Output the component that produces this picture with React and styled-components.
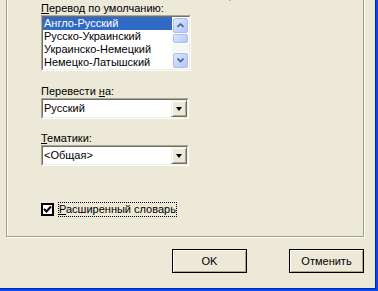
import React from "react";
import styled, { createGlobalStyle } from "styled-components";

const Global = createGlobalStyle`
  html, body { margin: 0; padding: 0; background: #ECE9D8; overflow: hidden; }
  body { font-family: "Liberation Sans", Arial, sans-serif; font-size: 11px; color: #000; }
`;

const Frame = styled.div`
  width: 378px;
  height: 291px;
  box-sizing: border-box;
  border-right: 2px solid #0A48E6;
  border-bottom: 2px solid #0A48E6;
  overflow: hidden;
`;

const Window = styled.div`
  height: 100%;
  box-sizing: border-box;
  border-right: 1px solid #0025B8;
  border-bottom: 1px solid #0025B8;
  background: #ECE9D8;
  padding: 0 11px 0 6px;
  display: flex;
  flex-direction: column;
`;

const Group = styled.div`
  margin-top: -20px;
  height: 257px;
  box-sizing: border-box;
  border: 1px solid #A09E90;
  box-shadow: inset 1px 1px 0 #fff, 1px 1px 0 #fff;
  padding: 8px 0 0 34px;
  display: flex;
  flex-direction: column;
  align-items: flex-start;
`;

const Note = styled.div`
  margin-left: 144px;
  height: 13px;
  line-height: 13px;
  color: #8a8a80;
`;

const Label = styled.div`
  height: 13px;
  line-height: 13px;
  margin-top: ${(p) => p.$mt || 0}px;
  u { text-decoration: underline; }
`;

const Sunken = styled.div`
  box-sizing: border-box;
  width: ${(p) => p.$w}px;
  height: ${(p) => p.$h}px;
  border-top: 1px solid #ACA899;
  border-left: 1px solid #ACA899;
  border-right: 1px solid #fff;
  border-bottom: 1px solid #fff;
  display: flex;
`;

const SunkenInner = styled.div`
  flex: 1;
  display: flex;
  border-top: 1px solid #716F64;
  border-left: 1px solid #716F64;
  border-right: 1px solid #F1EFE2;
  border-bottom: 1px solid #F1EFE2;
  background: #fff;
`;

const Items = styled.div`
  flex: 1;
  display: flex;
  flex-direction: column;
`;

const Item = styled.div`
  height: 13px;
  line-height: 13px;
  padding-left: 1px;
  white-space: nowrap;
  background: ${(p) => (p.$sel ? "#316AC5" : "transparent")};
  color: ${(p) => (p.$sel ? "#fff" : "#000")};
`;

const Scroll = styled.div`
  width: 17px;
  display: flex;
  flex-direction: column;
  background: #F7F7F2;
`;

const ScrollBtn = styled.div`
  height: 17px;
  box-sizing: border-box;
  border: 1px solid #fff;
  display: flex;
  flex-shrink: 0;
  margin-top: ${(p) => (p.$down ? "auto" : "0")};
`;

const ScrollFace = styled.div`
  flex: 1;
  border: 1px solid #A9BDEE;
  border-radius: 2px;
  background: linear-gradient(135deg, #DDE6FD 0%, #C3D3FB 60%, #B3C6F6 100%);
  display: flex;
  align-items: center;
  justify-content: center;
`;

const Thumb = styled.div`
  height: 10px;
  box-sizing: border-box;
  border: 1px solid #fff;
  border-top: 0;
  display: flex;
`;

const Combo = styled(Sunken)`
  margin-top: 0;
`;

const ComboText = styled.div`
  flex: 1;
  padding-left: 1px;
  line-height: 17px;
  white-space: nowrap;
`;

const DropBtn = styled.div`
  width: 16px;
  box-sizing: border-box;
  background: #ECE9D8;
  border-top: 1px solid #F1EFE2;
  border-left: 1px solid #F1EFE2;
  border-right: 1px solid #716F64;
  border-bottom: 1px solid #716F64;
  box-shadow: inset 1px 1px 0 #fff, inset -1px -1px 0 #ACA899;
  display: flex;
  align-items: center;
  justify-content: center;
`;

const Triangle = styled.div`
  width: 0;
  height: 0;
  border-left: 3.5px solid transparent;
  border-right: 3.5px solid transparent;
  border-top: 4px solid #000;
`;

const CheckRow = styled.div`
  margin-top: 36px;
  display: flex;
  align-items: center;
  gap: 4px;
`;

const CheckBox = styled.div`
  width: 13px;
  height: 13px;
  box-sizing: border-box;
  border: 2px solid #000;
  background: #fff;
  display: flex;
  align-items: center;
  justify-content: center;
`;

const CheckLabel = styled.div`
  outline: 1px dotted #000;
  outline-offset: -1px;
  padding: 1px 1px;
  line-height: 13px;
`;

const Buttons = styled.div`
  margin-top: 12px;
  display: flex;
  justify-content: flex-end;
  gap: 42px;
`;

const Button = styled.div`
  width: 75px;
  height: 24px;
  box-sizing: border-box;
  border: 1px solid #000;
  box-shadow: inset 1px 1px 0 #fff, inset -1px -1px 0 #ACA899;
  background: #ECE9D8;
  display: flex;
  align-items: center;
  justify-content: center;
`;

const Arrow = ({ down }) => (
  <svg width="7" height="5" viewBox="0 0 7 5">
    <path
      d={down ? "M0.5 0.5 L3.5 3.5 L6.5 0.5" : "M0.5 4 L3.5 1 L6.5 4"}
      fill="none"
      stroke="#4D6185"
      strokeWidth="1.6"
    />
  </svg>
);

export default function App() {
  return (
    <>
      <Global />
      <Frame>
        <Window>
          <Group>
            <Note>www.lostportal.com</Note>
            <Label>
              <u>П</u>еревод по умолчанию:
            </Label>
            <Sunken $w={150} $h={56}>
              <SunkenInner>
                <Items>
                  <Item $sel>Англо-Русский</Item>
                  <Item>Русско-Украинский</Item>
                  <Item>Украинско-Немецкий</Item>
                  <Item>Немецко-Латышский</Item>
                </Items>
                <Scroll>
                  <ScrollBtn>
                    <ScrollFace>
                      <Arrow />
                    </ScrollFace>
                  </ScrollBtn>
                  <Thumb>
                    <ScrollFace />
                  </Thumb>
                  <ScrollBtn $down>
                    <ScrollFace>
                      <Arrow down />
                    </ScrollFace>
                  </ScrollBtn>
                </Scroll>
              </SunkenInner>
            </Sunken>
            <Label $mt={14}>
              Перевести <u>н</u>а:
            </Label>
            <Combo $w={148} $h={21}>
              <SunkenInner>
                <ComboText>Русский</ComboText>
                <DropBtn>
                  <Triangle />
                </DropBtn>
              </SunkenInner>
            </Combo>
            <Label $mt={13}>
              <u>Т</u>ематики:
            </Label>
            <Combo $w={148} $h={21}>
              <SunkenInner>
                <ComboText>&lt;Общая&gt;</ComboText>
                <DropBtn>
                  <Triangle />
                </DropBtn>
              </SunkenInner>
            </Combo>
            <CheckRow>
              <CheckBox>
                <svg width="9" height="9" viewBox="0 0 9 9">
                  <path d="M1 4 L3.5 6.5 L8 1.5" fill="none" stroke="#000" strokeWidth="2" />
                </svg>
              </CheckBox>
              <CheckLabel>
                <u>Р</u>асширенный словарь
              </CheckLabel>
            </CheckRow>
          </Group>
          <Buttons>
            <Button>OK</Button>
            <Button>Отменить</Button>
          </Buttons>
        </Window>
      </Frame>
    </>
  );
}
